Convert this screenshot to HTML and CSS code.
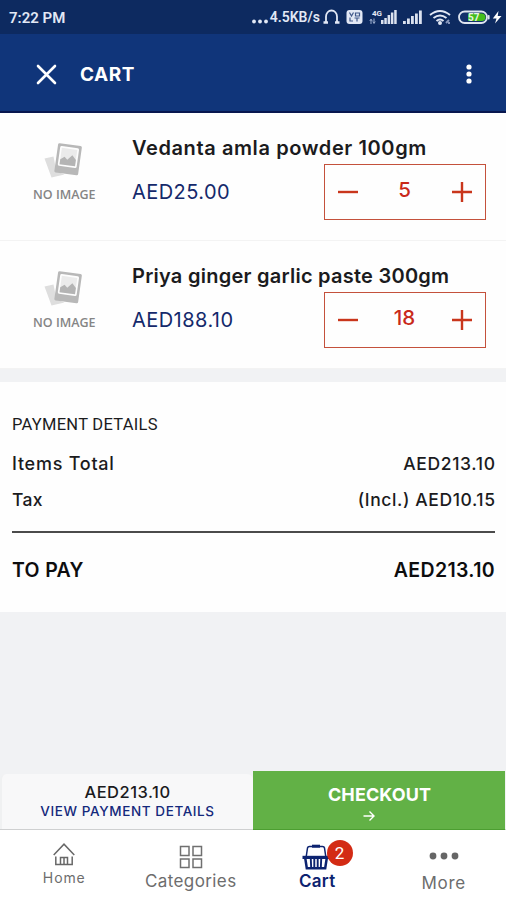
FILE: index.html
```html
<!DOCTYPE html>
<html lang="en">
<head>
<meta charset="utf-8">
<title>Cart</title>
<link rel="stylesheet" href="styles.css">
</head>
<body>
<svg class="defs" width="0" height="0">
  <symbol id="no-image" viewBox="0 0 38 36">
    <path d="M.5 15.500l9-2 3 15 8 3-13 3z" fill="#dedede"/>
    <g transform="rotate(8 24 17)">
      <rect x="12" y="1.500" width="24" height="29.500" rx="1.500" fill="#b8b8b8"/>
      <rect x="14.500" y="4" width="19" height="20" rx="1.500" fill="#fdfdfd"/>
      <rect x="16.200" y="5.700" width="15.600" height="16.600" fill="#ebebeb"/>
      <path d="M16.200 22.300v-5l4-3 3 2.500 4.500-5 4.100 4v6.500z" fill="#b4b4b4"/>
    </g>
  </symbol>
</svg>
<div class="app">
  <div class="status">
    <span class="clock">7:22 PM</span>
    <div class="indicators">
      <svg class="dots" width="18" height="18" fill="#e2e8f5"><circle cx="3" cy="13.500" r="1.900"/><circle cx="9" cy="13.500" r="1.900"/><circle cx="15" cy="13.500" r="1.900"/></svg>
      <span class="speed">4.5KB/s</span>
      <svg class="headset" width="17" height="18" fill="none" stroke="#e2e8f5" stroke-width="1.800"><path d="M3 14.500V8.500a5.500 6 0 0 1 11 0v6"/><path d="M.5 14.500h4.500M12 14.500h4.500" stroke-width="2.600"/></svg>
      <svg class="volte" width="17" height="18"><rect x=".5" y="2" width="16" height="14" rx="3" fill="#e2e8f5"/><path d="M3.500 4.500l2 3.500 2-3.500M9.500 5h4v3h-4zM4 9.500V13h3M8.500 10h5M11 10v3.500" fill="none" stroke="#41598b" stroke-width="1.200"/></svg>
      <svg class="signal-4g" width="28" height="18"><g fill="#dbe2ef"><rect x="12" y="12" width="2.500" height="4"/><rect x="15.300" y="10" width="2.500" height="6"/><rect x="18.600" y="7" width="2.500" height="9"/><rect x="21.900" y="4.500" width="2.500" height="11.500"/><rect x="25.200" y="2" width="2.500" height="14"/></g><text x="3" y="8" class="tiny">4G</text><path d="M2 16v-4M5 10.500v4M.8 13l1.200-2 1.200 2M3.800 13.500l1.200 2 1.200-2" stroke="#9fb0d0" fill="none"/></svg>
      <svg class="signal" width="20" height="18" fill="#dbe2ef"><rect x="0" y="13" width="2.800" height="3"/><rect x="4" y="10.500" width="2.800" height="5.500"/><rect x="8" y="8" width="2.800" height="8"/><rect x="12" y="5.500" width="2.800" height="10.500"/><rect x="16" y="2.500" width="2.800" height="13.500"/></svg>
      <svg class="wifi" width="22" height="18" fill="none" stroke="#e2e8f5" stroke-width="2"><path d="M1 7q10-8 20 0M4.500 10q6.500-5 13 0M7.500 13q3.500-3 7 0"/><circle cx="11" cy="15" r="1"/><path d="M17 15l3-3M20 16v-2" stroke="#8797bd"/></svg>
      <svg class="battery" width="32" height="18"><rect x="1" y="3.500" width="28" height="11.500" rx="5.700" fill="#12306b" stroke="#dfe5f0" stroke-width="1.800"/><path d="M10 5.500h13.500q4 0 4 3.800t-4 3.800H10z" fill="#43bd1c"/><rect x="29.800" y="7" width="1.800" height="4.500" rx=".8" fill="#dfe5f0"/><text x="10" y="13" class="charge">57</text></svg>
      <svg class="bolt" width="10" height="18"><path d="M6.500 3L.8 10.500h3.700L3 15.500 9.500 8H5.700z" fill="#fff"/></svg>
    </div>
  </div>
  <header class="header">
    <svg class="close" width="21" height="21" viewBox="0 0 21 21"><path d="M2 2l17 17M19 2L2 19" stroke="#fff" stroke-width="2.600" stroke-linecap="round"/></svg>
    <h1 class="heading">CART</h1>
    <svg class="menu" width="6" height="20" fill="#fff"><circle cx="3" cy="3" r="2.600"/><circle cx="3" cy="10" r="2.600"/><circle cx="3" cy="17" r="2.600"/></svg>
  </header>

  <section class="item">
    <div class="thumb"><svg width="38" height="36"><use href="#no-image"/></svg><span>NO IMAGE</span></div>
    <div class="info">
      <h2 class="name name-a">Vedanta amla powder 100gm</h2>
      <div class="line">
        <span class="price">AED25.00</span>
        <div class="stepper">
          <svg width="20" height="20"><path d="M0 10h20" stroke="#c9361c" stroke-width="2.400"/></svg>
          <span class="qty">5</span>
          <svg width="20" height="20"><path d="M0 10h20M10 0v20" stroke="#c9361c" stroke-width="2.400"/></svg>
        </div>
      </div>
    </div>
  </section>
  <section class="item">
    <div class="thumb"><svg width="38" height="36"><use href="#no-image"/></svg><span>NO IMAGE</span></div>
    <div class="info">
      <h2 class="name name-b">Priya ginger garlic paste 300gm</h2>
      <div class="line">
        <span class="price">AED188.10</span>
        <div class="stepper">
          <svg width="20" height="20"><path d="M0 10h20" stroke="#c9361c" stroke-width="2.400"/></svg>
          <span class="qty">18</span>
          <svg width="20" height="20"><path d="M0 10h20M10 0v20" stroke="#c9361c" stroke-width="2.400"/></svg>
        </div>
      </div>
    </div>
  </section>

  <section class="payment">
    <h3 class="caption">PAYMENT DETAILS</h3>
    <div class="row"><span class="label-items">Items Total</span><span class="sum">AED213.10</span></div>
    <div class="row"><span class="label-tax">Tax</span><span class="tax">(Incl.) AED10.15</span></div>
    <div class="row total"><span>TO PAY</span><span>AED213.10</span></div>
  </section>

  <div class="actions">
    <div class="summary"><span class="summary-sum">AED213.10</span><span class="summary-link">VIEW PAYMENT DETAILS</span></div>
    <div class="checkout"><span>CHECKOUT</span>
      <svg width="12" height="12" fill="none" stroke="#fff" stroke-width="1.400"><path d="M.5 6h10.500M6.500 1.500L11 6l-4.500 4.500"/></svg>
    </div>
  </div>
  <nav class="nav">
    <div class="tab home">
      <svg width="22" height="23" fill="none" stroke="#686868" stroke-width="1.500"><path d="M.7 12L11 1.200 21.300 12M2.800 13.500v8h16.400v-8M7.500 21.500v-7h7v7M11 15v6.500"/></svg>
      <span>Home</span>
    </div>
    <div class="tab categories">
      <svg width="24" height="24" fill="none" stroke="#707070" stroke-width="1.500"><rect x="1.500" y="1.500" width="8.500" height="9"/><rect x="14" y="1.500" width="8.500" height="9"/><rect x="1.500" y="14" width="8.500" height="8.500"/><rect x="14" y="14" width="8.500" height="8.500"/></svg>
      <span>Categories</span>
    </div>
    <div class="tab cart">
      <div class="basket">
        <svg width="28" height="26" fill="none" stroke="#0c2370"><path d="M4.300 12L5.500 4q.3-1.600 2-1.600h13q1.700 0 2 1.600l1.200 8" stroke-width="1.500"/><path d="M10 2.200h8" stroke-width="3"/><path d="M.5 11.800h27v3.200H.5z" fill="#0c2370" stroke="none"/><path d="M3.300 14.500l1.500 9.800h18.400l1.500-9.800" stroke-width="2.500"/><path d="M8.800 15l.4 9M12.300 15v9M15.700 15v9M19.200 15l-.4 9" stroke-width="1.900"/></svg>
        <span class="badge">2</span>
      </div>
      <span>Cart</span>
    </div>
    <div class="tab more">
      <svg width="30" height="10" fill="#666"><circle cx="4" cy="5" r="3.400"/><circle cx="15" cy="5" r="3.400"/><circle cx="26" cy="5" r="3.400"/></svg>
      <span>More</span>
    </div>
  </nav>
</div>
</body>
</html>
```
FILE: styles.css
```css
* { box-sizing: border-box; }
body { margin: 0; font-family: Inter, "Liberation Sans", sans-serif; background: #f1f2f4; color: #1b1b1d; }
h1, h2, h3 { margin: 0; }
svg { display: block; flex: none; }
span { white-space: nowrap; }
.defs { position: absolute; }
.app { width: 506px; height: 900px; display: flex; flex-direction: column; overflow: hidden; }

.status { height: 34px; background: #0d2a60; display: flex; justify-content: space-between; padding: 8px 4px 0 9px; color: #e2e8f5; font-family: Roboto, sans-serif; font-weight: 600; }
.clock { font-size: 15px; line-height: 20px; }
.indicators { display: flex; height: 18px; }
.speed { font-size: 14px; line-height: 19px; margin-left: 1px; }
.headset { margin-left: 3px; }
.volte { margin-left: 6px; }
.signal-4g { margin-left: 6px; }
.signal { margin-left: 6px; }
.wifi { margin-left: 6px; }
.battery { margin-left: 7px; }
.bolt { margin-left: 2px; }
.tiny { font: 700 8px Roboto, sans-serif; fill: #e2e8f5; }
.charge { font: 700 10px Roboto, sans-serif; fill: #e8f4e4; }

.header { height: 79px; background: #10357a; border-bottom: 2px solid #08174f; display: flex; align-items: center; padding: 3px 34px 0 36px; color: #fff; }
.heading { font-size: 19px; line-height: 24px; font-weight: 700; margin: 2px 0 0 23px; letter-spacing: .5px; }
.menu { margin-left: auto; }

.item { height: 128px; background: #fefefe; border-bottom: 1px solid #f3f3f3; display: flex; padding: 22px 20px 0 0; }
.thumb { width: 132px; padding-left: 33px; padding-top: 8px; }
.thumb svg { margin-left: 11px; }
.thumb span { display: block; font: 600 12.500px/18px "Open Sans", sans-serif; color: #858585; margin-top: 7px; }
.info { flex: 1; }
.name { font-size: 20px; line-height: 26px; font-weight: 600; white-space: nowrap; }
.name-a { letter-spacing: .6px; }
.name-b { letter-spacing: .25px; }
.line { display: flex; justify-content: space-between; margin-top: 3px; }
.price { font-size: 20px; line-height: 28px; margin-top: 14px; color: #14296b; letter-spacing: .45px; }
.stepper { width: 162px; height: 56px; border: 1.500px solid #c4513c; display: flex; align-items: center; justify-content: space-between; padding: 0 13px; color: #c9291a; }
.qty { font-size: 20.500px; line-height: 28px; font-weight: 500; margin: -5px 1px 0 0; }

.payment { height: 230px; margin-top: 13px; background: #fefefe; padding: 30px 11px 0 12px; }
.caption { font: 400 16.500px/25px Roboto, sans-serif; letter-spacing: .27px; }
.row { display: flex; justify-content: space-between; font-size: 17.500px; line-height: 36px; font-weight: 500; }
.row:nth-of-type(1) { margin-top: 9px; }
.label-items { font-size: 18px; letter-spacing: .75px; }
.label-tax { letter-spacing: .3px; }
.sum { letter-spacing: .65px; margin-right: -.65px; }
.tax { letter-spacing: .6px; margin-right: -.6px; }
.total { border-top: 2px solid #4b4b4b; margin-top: 13px; padding-top: 19px; font-size: 19.500px; font-weight: 600; color: #0d0d0e; letter-spacing: .35px; }

.actions { height: 60px; margin-top: auto; display: flex; border-bottom: 1px solid #cfd0d1; }
.summary { width: 253px; margin-top: 4px; border-radius: 6px 6px 0 0; background: #f8f8f9; border-left: 2px solid #f0f1f2; display: flex; flex-direction: column; align-items: center; padding-top: 7px; }
.summary-sum { font-size: 16.500px; line-height: 22px; font-weight: 500; letter-spacing: .5px; }
.summary-link { font-size: 13.500px; line-height: 16px; font-weight: 500; color: #14297c; letter-spacing: .6px; }
.checkout { width: 252px; background: #62b146; border-bottom: 1px solid #4c9e31; height: 59px; margin-top: 1px; color: #fff; display: flex; flex-direction: column; align-items: center; padding-top: 13px; font-size: 18px; line-height: 22px; font-weight: 700; letter-spacing: .1px; }
.checkout span { margin-left: 1px; }
.checkout svg { margin: 4px 0 0 -21px; }

.nav { height: 70px; background: #fff; display: flex; padding-left: 1px; }
.tab { width: 126.500px; flex: none; display: flex; flex-direction: column; align-items: center; color: #6d6d6d; }
.home { padding-top: 13px; font-size: 14px; line-height: 18px; letter-spacing: .9px; }
.home span { margin-top: 3px; }
.categories { padding-top: 15px; font-size: 17px; line-height: 22px; letter-spacing: .4px; }
.categories span { margin-top: 1px; }
.cart { padding-top: 14px; font-size: 17px; line-height: 22px; font-weight: 600; color: #0c2370; letter-spacing: .3px; }
.basket { position: relative; margin-left: -2px; }
.badge { position: absolute; left: 24.500px; top: -4px; width: 26px; height: 26px; border-radius: 50%; background: #d32b14; color: #fff; font: 400 17px/26px Roboto, sans-serif; text-align: center; }
.more { padding-top: 21px; font-size: 17px; line-height: 22px; letter-spacing: .7px; }
.more span { margin-top: 11px; }
```
